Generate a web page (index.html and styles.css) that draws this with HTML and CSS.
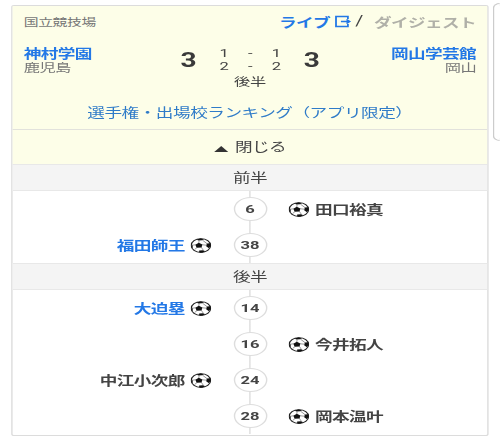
FILE: index.html
```
<!DOCTYPE html>
<html lang="ja">
<head>
<meta charset="UTF-8">
<meta name="viewport" content="width=device-width, initial-scale=1.0">
<link rel="stylesheet" href="styles.css">
<title>神村学園 - 岡山学芸館</title>
</head>
<body>
  <svg class="defs" width="0" height="0">
    <symbol id="ball" viewBox="0 0 30 30">
      <circle cx="15" cy="15" r="13.900" fill="#fff" stroke="#222" stroke-width="1.700"/>
      <path d="M7 13.500l5-4 5 3.500-1 6-7 .5z" fill="#111"/>
      <path d="M8.500 3l6-2 5 1.500-3 2-5 .5zM23.500 11l4.500-.5 .8 5-2.300 5-4-4zM12.500 25l5.500-.5 3.500 2-4 2.500-5-.5zM1.500 13l1.500 1 .5 5-1 1z" fill="#111"/>
      <path d="M12 10l.5-5M16.500 13.500l7 1M15.500 18.500l3 6M9.500 19l-3.500 4M7.500 13.500l-5 1M17 4l7 7.500" fill="none" stroke="#555" stroke-width="1"/>
    </symbol>
  </svg>
  <div class="page">
    <div class="card">
      <div class="summary">
        <div class="top">
          <span class="stadium">国立競技場</span>
          <span class="links">
            <a class="live">ライブ</a>
            <svg class="exit" viewBox="0 0 12 12"><path d="M9.500 3.500V1H1v10h8.500V8.500M4.500 6h6M8.500 4l2.300 2-2.300 2" fill="none" stroke="#2378e6" stroke-width="1.300"/></svg>
            <span class="slash">/</span>
            <span class="digest">ダイジェスト</span>
          </span>
        </div>
        <div class="match">
          <div class="team">
            <a class="name">神村学園</a>
            <span class="pref">鹿児島</span>
          </div>
          <div class="score">3</div>
          <div class="halves">
            <span>1</span><span>-</span><span>1</span>
            <span>2</span><span>-</span><span>2</span>
          </div>
          <div class="score">3</div>
          <div class="team away">
            <a class="name">岡山学芸館</a>
            <span class="pref">岡山</span>
          </div>
        </div>
        <div class="status">後半</div>
        <a class="ranking">選手権・出場校ランキング（アプリ限定）</a>
      </div>
      <div class="toggle"><span class="triangle"></span>閉じる</div>

      <div class="period">前半</div>
      <div class="goals">
        <div class="goal">
          <span class="home"></span>
          <span class="minute">6</span>
          <span class="player"><svg class="ball"><use href="#ball"/></svg><span class="who">田口裕真</span></span>
        </div>
        <div class="goal">
          <span class="player home link"><span class="who">福田師王</span><svg class="ball"><use href="#ball"/></svg></span>
          <span class="minute">38</span>
        </div>
      </div>

      <div class="period">後半</div>
      <div class="goals">
        <div class="goal">
          <span class="player home link"><span class="who">大迫塁</span><svg class="ball"><use href="#ball"/></svg></span>
          <span class="minute">14</span>
        </div>
        <div class="goal">
          <span class="home"></span>
          <span class="minute">16</span>
          <span class="player"><svg class="ball"><use href="#ball"/></svg><span class="who">今井拓人</span></span>
        </div>
        <div class="goal">
          <span class="player home"><span class="who">中江小次郎</span><svg class="ball"><use href="#ball"/></svg></span>
          <span class="minute">24</span>
        </div>
        <div class="goal">
          <span class="home"></span>
          <span class="minute">28</span>
          <span class="player"><svg class="ball"><use href="#ball"/></svg><span class="who">岡本温叶</span></span>
        </div>
      </div>
    </div>
    <div class="next-card"></div>
  </div>
</body>
</html>
```
FILE: styles.css
```
* {
  box-sizing: border-box;
}

body {
  margin: 0;
  height: 440px;
  overflow: hidden;
  background-color: #fff;
  font-family: Roboto, "Noto Sans CJK JP", sans-serif;
  font-size: 12.6px;
  letter-spacing: -0.45px;
  color: #444;
}

.defs {
  position: absolute;
}

/* everything is drawn wide: 1.4 times across, 1 down */
.page {
  display: flex;
  align-items: flex-start;
  gap: 3px;
  width: 357px;
  padding: 5px 0 0 8px;
  transform: scaleX(1.4);
  transform-origin: 0 0;
}

.card {
  flex: none;
  width: 341px;
  height: 431px;
  border: 1px solid #dcdcdc;
  border-radius: 2px;
}

.next-card {
  flex: 1;
  height: 138px;
  margin-top: -2px;
  border: 1px solid #ccc;
  border-right: none;
  border-radius: 5px 0 0 5px;
}

.summary {
  height: 124px;
  padding: 0 8px;
  background-color: #fdfee8;
  border-bottom: 1px solid #e2e2dc;
}

.top {
  display: flex;
  justify-content: space-between;
  align-items: center;
  height: 30px;
}

.stadium {
  font-size: 10.6px;
  letter-spacing: -0.3px;
  color: #777;
}

.links {
  display: flex;
  align-items: center;
}

.live,
.name,
.link {
  color: #2378e6;
  font-weight: bold;
}

.exit {
  width: 12px;
  height: 13px;
  margin: 0 3px 0 3px;
}

.slash {
  font-size: 14px;
  margin-right: 8px;
}

.digest {
  color: #b0b0a8;
  font-weight: bold;
}

.match {
  display: grid;
  grid-template-columns: 1fr 32px 56px 32px 1fr;
  height: 29px;
  margin-top: 10px;
}

.team {
  display: flex;
  flex-direction: column;
  line-height: 15px;
}

.away {
  align-items: flex-end;
}

.pref {
  font-size: 11.6px;
  color: #777;
}

.score {
  font-size: 20px;
  font-weight: bold;
  line-height: 29px;
  text-align: center;
  color: #3a3a3a;
}

.halves {
  display: grid;
  grid-template-columns: repeat(3, 1fr);
  padding-top: 1px;
  font-size: 11.8px;
  line-height: 13px;
  text-align: center;
  align-content: start;
}

.status {
  height: 15px;
  line-height: 15px;
  font-size: 11.6px;
  letter-spacing: -0.2px;
  text-align: center;
}

.ranking {
  display: block;
  margin-top: 14px;
  line-height: 18px;
  letter-spacing: -0.35px;
  text-align: center;
  white-space: nowrap;
  color: #2f7bc8;
}

.toggle {
  display: flex;
  justify-content: center;
  align-items: center;
  gap: 5px;
  height: 34px;
  padding-bottom: 4px;
  background-color: #fdfee8;
}

.triangle {
  margin-top: 8px;
  border-left: 5px solid transparent;
  border-right: 5px solid transparent;
  border-bottom: 6px solid #333;
}

.period {
  height: 27px;
  line-height: 26px;
  text-align: center;
  background-color: #f4f4f4;
  border-top: 1px solid #e8e8e8;
  border-bottom: 1px solid #e8e8e8;
}

.goals {
  background: linear-gradient(#ddd, #ddd) center / 1px 100% no-repeat;
}

.goal {
  display: grid;
  grid-template-columns: 1fr 24px 1fr;
  column-gap: 15.5px;
  align-items: center;
  height: 36px;
}

.minute {
  height: 24px;
  line-height: 23px;
  border: 1px solid #ddd;
  border-radius: 50%;
  background-color: #fff;
  font-size: 11.8px;
  letter-spacing: 0;
  font-weight: bold;
  text-align: center;
}

.player {
  display: flex;
  align-items: center;
  gap: 4px;
  font-weight: bold;
}

.who {
  padding-bottom: 2px;
}

.home {
  justify-content: flex-end;
}

.ball {
  width: 15px;
  height: 15px;
}
```
